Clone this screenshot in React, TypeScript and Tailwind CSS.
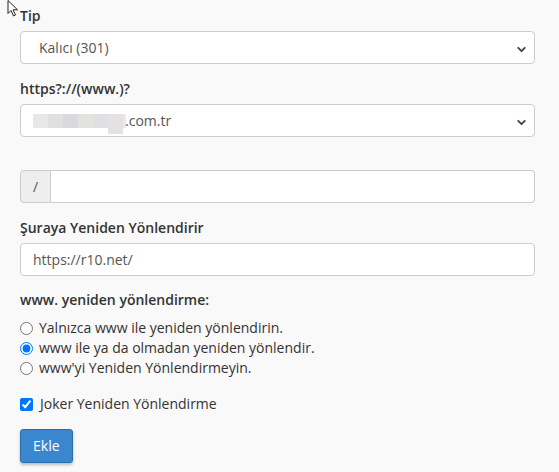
import { ChevronDown } from "lucide-react";

const blurBlocks = [
  { w: 15, c: "bg-[#e7e7e7]" },
  { w: 15, c: "bg-[#e0e0e0]" },
  { w: 15, c: "bg-[#dadade]" },
  { w: 15, c: "bg-[#e2e2de]" },
  { w: 15, c: "bg-[#dfe0e3]" },
];

function SelectBox({ children }: { children: React.ReactNode }) {
  return (
    <div className="relative flex h-[33px] items-center rounded-[4px] border border-[#cccccc] bg-white pl-[18px] pr-8 text-[14px] text-[#555]">
      {children}
      <ChevronDown className="absolute right-[6px] top-[11px] h-[13px] w-[13px] text-[#444]" strokeWidth={3.5} />
    </div>
  );
}

export default function App() {
  return (
    <div
      className="relative min-h-[472px] w-[559px] bg-[#f9f9f9] pl-5 pr-6 pt-[6px] text-[14px] leading-5 text-[#333]"
      style={{ fontFamily: '"Open Sans", "Noto Sans", sans-serif' }}
    >
      {/* mouse pointer */}
      <svg className="absolute left-[7px] top-0" width="12" height="18" viewBox="0 0 12 18">
        <path d="M1 0.5 L1 13.5 L4 10.5 L6.5 16 L8.5 15 L6 9.8 L10.5 9.8 Z" fill="#fff" stroke="#222" strokeWidth="1" strokeLinejoin="round" />
      </svg>

      <div className="mb-[15px]">
        <label className="mb-[5px] block font-semibold">Tip</label>
        <SelectBox>Kalıcı (301)</SelectBox>
      </div>

      <div className="mb-[33px]">
        <label className="mb-[5px] block font-semibold">https?://(www.)?</label>
        <SelectBox>
          <span className="-ml-[6px] flex h-[14px] items-start">
            {blurBlocks.map((b, i) => (
              <span key={i} className={`${b.c} block h-[14px]`} style={{ width: b.w }} />
            ))}
            <span className="block h-[20px] w-[15px] bg-[#e3e1e1]" />
            <span className="block h-[14px] w-[3px] bg-[#e8e8e8]" />
          </span>
          <span className="-ml-[1px]">.com.tr</span>
        </SelectBox>
      </div>

      <div className="mb-[15px] flex h-[33px]">
        <span className="flex w-[31px] items-center justify-center rounded-l-[4px] border border-[#cccccc] bg-[#eeeeee] text-[#555]">
          /
        </span>
        <input className="flex-1 rounded-r-[4px] border border-l-0 border-[#cccccc] bg-white outline-none" />
      </div>

      <div className="mb-[14px]">
        <label className="mb-[5px] block font-semibold">Şuraya Yeniden Yönlendirir</label>
        <div className="flex h-[33px] items-center rounded-[4px] border border-[#cccccc] bg-white px-3 text-[#555]">
          https://r10.net/
        </div>
      </div>

      <div className="mb-[16px]">
        <div className="mb-[8px] font-semibold">www. yeniden yönlendirme:</div>
        {[
          { t: "Yalnızca www ile yeniden yönlendirin.", c: false },
          { t: "www ile ya da olmadan yeniden yönlendir.", c: true },
          { t: "www'yi Yeniden Yönlendirmeyin.", c: false },
        ].map((r) => (
          <label key={r.t} className="flex h-5 items-center gap-[6px]">
            <input type="radio" name="www" defaultChecked={r.c} className="m-0 h-[13px] w-[13px]" />
            <span>{r.t}</span>
          </label>
        ))}
      </div>

      <label className="mb-[15px] flex h-5 items-center gap-[7px]">
        <input type="checkbox" defaultChecked className="m-0 h-[13px] w-[13px]" />
        <span>Joker Yeniden Yönlendirme</span>
      </label>

      <button className="h-[34px] rounded-[3px] border border-[#2c6fad] bg-[#3a87d0] px-3 text-white shadow-[0_2px_3px_rgba(0,0,0,0.25)]">
        Ekle
      </button>
    </div>
  );
}
